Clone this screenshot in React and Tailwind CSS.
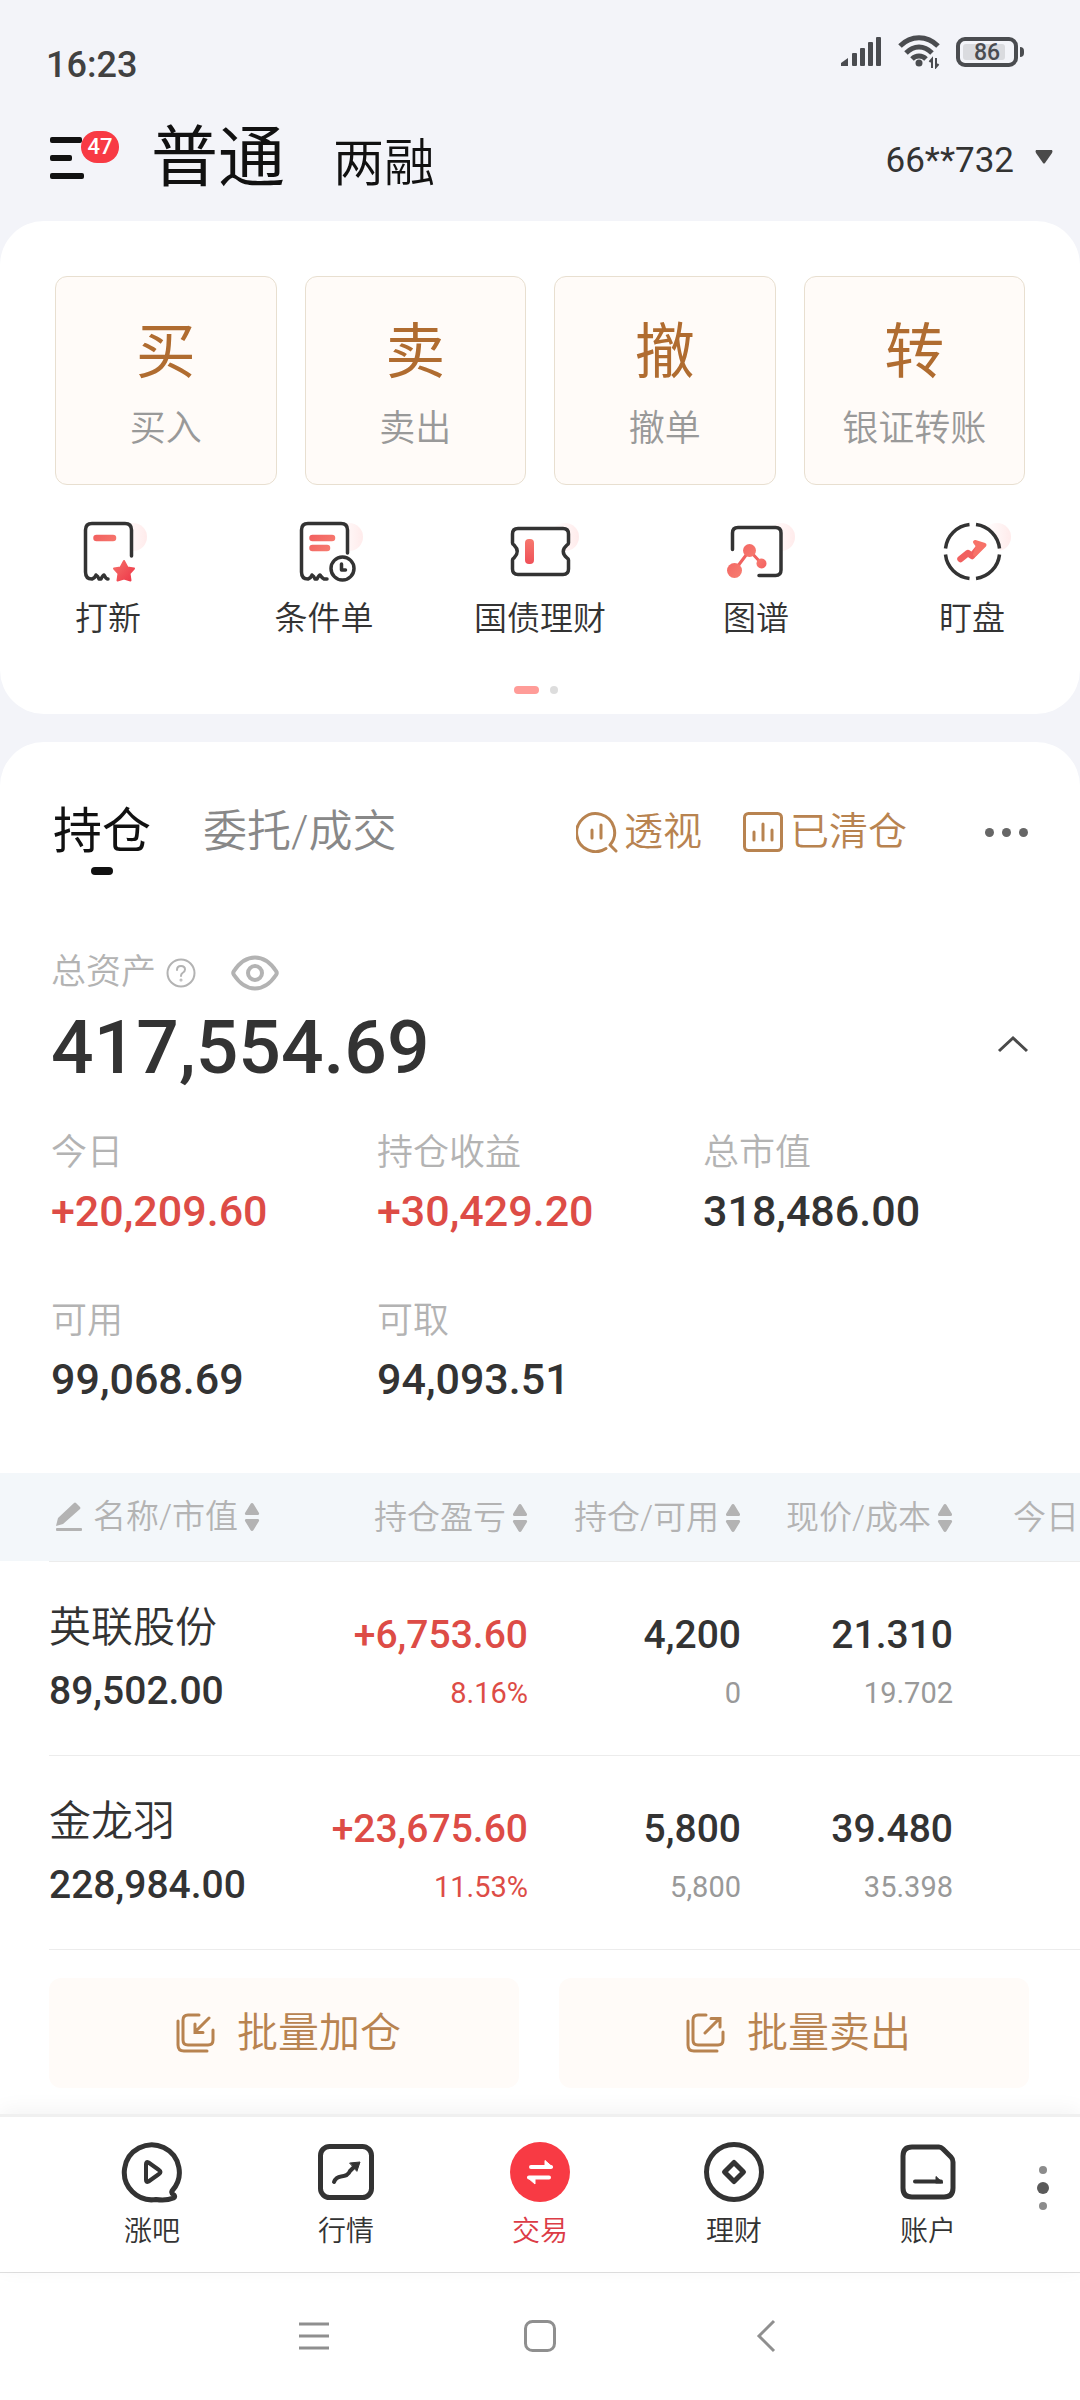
import React from 'react';

const tradeActions = [
  { mark: '买', label: '买入' },
  { mark: '卖', label: '卖出' },
  { mark: '撤', label: '撤单' },
  { mark: '转', label: '银证转账' }
];

const assetStats = [
  { label: '今日', value: '+20,209.60', up: true },
  { label: '持仓收益', value: '+30,429.20', up: true },
  { label: '总市值', value: '318,486.00' },
  { label: '可用', value: '99,068.69' },
  { label: '可取', value: '94,093.51' }
];

const holdings = [
  {
    name: '英联股份',
    marketValue: '89,502.00',
    profit: '+6,753.60',
    profitRate: '8.16%',
    position: '4,200',
    available: '0',
    price: '21.310',
    cost: '19.702'
  },
  {
    name: '金龙羽',
    marketValue: '228,984.00',
    profit: '+23,675.60',
    profitRate: '11.53%',
    position: '5,800',
    available: '5,800',
    price: '39.480',
    cost: '35.398'
  }
];

const StatusBar = () => (
  <div className="flex items-start justify-between pl-[46px] pr-14 pt-[35px] h-21">
    <span className="mt-3 text-[36px] leading-[36px] font-medium text-[#414141]">16:23</span>
    <div className="flex items-center gap-4 text-[#4a4c50]">
      <svg width="41" height="30" viewBox="0 0 41 30" fill="currentColor">
        <path d="M0 29V26L7 21V29Z" />
        <rect x="11" y="16" width="5" height="13" rx="1" />
        <rect x="19" y="11" width="5" height="18" rx="1" />
        <rect x="27" y="5" width="5" height="24" rx="1" />
        <rect x="35" y="0" width="5" height="29" rx="1" />
      </svg>
      <svg width="42" height="34" viewBox="0 0 42 34" fill="none" stroke="currentColor" strokeWidth="5">
        <path d="M2 11C13 0 29 0 40 11" />
        <path d="M8 18C16 10 26 10 34 18" />
        <path d="M14 24C18 20 24 20 28 24" />
        <circle cx="21" cy="28" r="3.500" fill="currentColor" stroke="none" />
        <path d="M34 33V24L31.500 27M38 23V32L40.500 29" strokeWidth="2" />
      </svg>
      <div className="flex items-center gap-0.5">
        <div className="flex h-[30px] w-[62px] rounded-[9px] border-4 border-current p-[3px]">
          <div className="flex w-[42px] items-center justify-center rounded-[3px] bg-[#dadbdf] pl-1.5 text-[23px] leading-none font-medium">86</div>
        </div>
        <div className="h-2.5 w-1 rounded-r bg-current"></div>
      </div>
    </div>
  </div>
);

const Header = () => (
  <header className="flex items-start justify-between pl-[50px] pr-[26px] h-[137px]">
    <div className="flex items-start">
      <button type="button" aria-label="菜单" className="relative mt-[51px] w-[70px] h-12 text-[#111111]">
        <svg width="36" height="44" viewBox="0 0 36 44" fill="currentColor">
          <rect x="0" y="0" width="32" height="6" rx="2" />
          <rect x="0" y="18" width="22" height="6" rx="2" />
          <rect x="0" y="36" width="34" height="6" rx="2" />
        </svg>
        <span className="absolute -top-1 left-[31px] flex h-8 w-[38px] items-center justify-center rounded-full bg-[#f83a44] text-[22px] leading-none font-medium text-white">47</span>
      </button>
      <div className="ml-[31px] mt-[34px] flex items-baseline gap-12 text-[#111111]">
        <button type="button" className="text-[67px] leading-[80px] font-normal">普通</button>
        <button type="button" className="text-[51px] leading-[80px]">两融</button>
      </div>
    </div>
    <button type="button" className="mt-[59px] flex items-start gap-5 text-[35px] leading-9 font-normal text-[#333333]">
      66**732
      <svg className="mt-1.5" width="20" height="16" viewBox="0 0 20 16" fill="#4a4a4a">
        <path d="M2 1H18Q19 2 18 4L11 14Q10 15 9 14L2 4Q1 2 2 1Z" />
      </svg>
    </button>
  </header>
);

/* Soft pink disc behind each quick entry icon */
const QuickIcon = ({ children }) => (
  <svg width="80" height="72" viewBox="0 0 80 72" fill="none" stroke="#333333" strokeWidth="3.500" strokeLinecap="round" strokeLinejoin="round">
    <circle cx="65" cy="22" r="14" fill="url(#quickDisc)" stroke="none" />
    {children}
  </svg>
);

const quickEntries = [
  {
    label: '打新',
    icon: (
      <QuickIcon>
        <path d="M63.500 41V15Q63.500 8.500 57 8.500H24Q17.500 8.500 17.500 15V57Q17.500 64 24 64Q27 63 28 60Q30 61 31 64H33Q35 60 36 60Q38 64 40 64" fill="white" />
        <path d="M28.500 23H45" stroke="url(#quickRed)" strokeWidth="6.500" />
        <path d="M56 46L59.500 52.500L66 53.500L61.500 58.500L62.500 65.500L56 63.500L49.500 65.500L50.500 58.500L46 53.500L52.500 52.500Z" fill="url(#quickRed)" stroke="url(#quickRed)" strokeWidth="2" />
      </QuickIcon>
    )
  },
  {
    label: '条件单',
    icon: (
      <QuickIcon>
        <path d="M63.500 38V15Q63.500 8.500 57 8.500H24Q17.500 8.500 17.500 15V57Q17.500 64 24 64Q27 63 28 60Q30 61 31 64H33Q35 60 36 60Q38 63 40 64H43" fill="white" />
        <path d="M28.500 23H48M28.500 33H43" stroke="url(#quickRed)" strokeWidth="6.500" />
        <circle cx="58.500" cy="53.500" r="11.500" fill="white" />
        <path d="M57.500 49V55H61.500" />
      </QuickIcon>
    )
  },
  {
    label: '国债理财',
    icon: (
      <QuickIcon>
        <path d="M18 13.500H63Q68.500 13.500 68.500 19V28Q68.500 29.500 67 30Q59.500 36.500 67 43Q68.500 44 68.500 45V54Q68.500 59.500 63 59.500H18Q12.500 59.500 12.500 54V45Q12.500 44 14 43Q20.500 36.500 14 30Q12.500 29.500 12.500 28V19Q12.500 13.500 18 13.500Z" fill="white" />
        <rect x="25" y="24" width="9" height="25" rx="4" fill="url(#quickRed2)" stroke="none" />
      </QuickIcon>
    )
  },
  {
    label: '图谱',
    icon: (
      <QuickIcon>
        <path d="M16.500 34.500V18Q16.500 12.500 22 12.500H59.500Q65 12.500 65 18V55Q65 60.500 59.500 60.500H43" fill="white" />
        <path d="M18.500 55.500L33.500 35.500L45.500 48.500" stroke="#f0625f" strokeWidth="3" />
        <circle cx="33.500" cy="35.500" r="6.500" fill="url(#quickRed)" stroke="none" />
        <circle cx="18.500" cy="55.500" r="7.500" fill="url(#quickRed)" stroke="none" />
        <circle cx="45.500" cy="48.500" r="5" fill="url(#quickRed)" stroke="none" />
      </QuickIcon>
    )
  },
  {
    label: '盯盘',
    icon: (
      <QuickIcon>
        <circle cx="40.500" cy="36.500" r="27" fill="white" stroke="none" />
        <path d="M44 9.500A27 27 0 0 1 67.500 33.500M67.500 39.500A27 27 0 0 1 44 63.500M37.500 63.500A27 27 0 0 1 13.500 39.500M13.500 33.500A27 27 0 0 1 37.500 9.500" strokeLinecap="butt" />
        <path d="M28.500 44L36 38L40 41L48 31" stroke="#f1605f" strokeWidth="6.500" />
        <path d="M43 27L52.500 30L43 39.500L46 31Z" fill="#f77c70" stroke="#f77268" strokeWidth="4" />
      </QuickIcon>
    )
  }
];

const QuickPanel = () => (
  <section className="rounded-[44px] bg-white pt-[55px] pb-5">
    <div className="grid grid-cols-4 gap-7 px-[55px]">
      {tradeActions.map((action) => (
        <button key={action.label} type="button" className="flex h-[209px] flex-col items-center rounded-xl border border-[#e8dfd0] bg-[#fffbf8] pt-11">
          <span className="text-[60px] leading-[64px] font-normal text-[#b06c30]">{action.mark}</span>
          <span className="mt-6 text-[36px] leading-10 text-[#999999]">{action.label}</span>
        </button>
      ))}
    </div>
    <svg width="0" height="0" className="absolute">
      <defs>
        <linearGradient id="quickDisc" x1="0" y1="0" x2="1" y2="0">
          <stop offset="0.300" stopColor="#fffafa" />
          <stop offset="1" stopColor="#ffebeb" />
        </linearGradient>
        <linearGradient id="quickRed" gradientUnits="userSpaceOnUse" x1="15" y1="20" x2="66" y2="66">
          <stop offset="0" stopColor="#f0575a" />
          <stop offset="0.500" stopColor="#f77c70" />
          <stop offset="1" stopColor="#ee3648" />
        </linearGradient>
        <linearGradient id="quickRed2" gradientUnits="userSpaceOnUse" x1="40" y1="24" x2="34" y2="50">
          <stop offset="0" stopColor="#f77c70" />
          <stop offset="1" stopColor="#ef5058" />
        </linearGradient>
      </defs>
    </svg>
    <div className="mt-[30px] grid grid-cols-5">
      {quickEntries.map((entry) => (
        <button key={entry.label} type="button" className="flex flex-col items-center">
          {entry.icon}
          <span className="mt-3 text-[33px] leading-10 text-[#333333]">{entry.label}</span>
        </button>
      ))}
    </div>
    <div className="mt-[47px] flex items-center justify-center gap-[11px] pr-2">
      <span className="h-2 w-[25px] rounded-full bg-[#ff9c98]"></span>
      <span className="size-2 rounded-full bg-[#dddddd]"></span>
    </div>
  </section>
);

const TabBar = () => (
  <div className="flex items-start justify-between pl-[53px] pr-[52px] pt-[60px]">
    <div className="flex items-start gap-[52px]">
      <button type="button" className="flex flex-col items-center text-[49px] leading-[60px] font-normal text-[#111111]">
        持仓
        <span className="mt-[5px] h-2 w-[22px] rounded-full bg-[#111111]"></span>
      </button>
      <button type="button" className="text-[44px] leading-[60px] text-[#888888]">委托/成交</button>
    </div>
    <div className="flex h-[60px] items-center text-[39px] leading-[60px] text-[#b88350]">
      <button type="button" className="flex items-center gap-1.5">
        <svg width="42" height="42" viewBox="0 0 42 42" fill="none" stroke="currentColor" strokeWidth="3" strokeLinecap="round">
          <path d="M34 34A19 19 0 1 0 30 37.500M34 34L40 40" />
          <path d="M16 19V27M25 14V27" />
        </svg>
        透视
      </button>
      <button type="button" className="ml-10 flex items-center gap-1.5">
        <svg width="42" height="42" viewBox="0 0 42 42" fill="none" stroke="currentColor" strokeWidth="3" strokeLinecap="round">
          <rect x="2.500" y="2.500" width="37" height="37" rx="4" />
          <path d="M12 21V29M21 13V29M30 19V29" />
        </svg>
        已清仓
      </button>
      <button type="button" aria-label="更多" className="ml-[78px] flex gap-2">
        <span className="size-[9px] rounded-full bg-[#666666]"></span>
        <span className="size-[9px] rounded-full bg-[#666666]"></span>
        <span className="size-[9px] rounded-full bg-[#666666]"></span>
      </button>
    </div>
  </div>
);

const AssetSummary = () => (
  <div className="pl-[51px] pr-[51px] pt-[78px]">
    <div className="flex items-center text-[35px] leading-10 text-[#b3b3b3]">
      <span>总资产</span>
      <button type="button" aria-label="总资产说明" className="ml-2.5">
        <svg width="30" height="30" viewBox="0 0 30 30" fill="none" stroke="currentColor" strokeWidth="2" strokeLinecap="round">
          <circle cx="15" cy="15" r="13.500" />
          <path d="M11 12Q11 8 15 8Q19 8 19 11.500Q19 13.500 16.500 15Q15 16 15 18" />
          <circle cx="15" cy="22" r="0.500" />
        </svg>
      </button>
      <button type="button" aria-label="隐藏金额" className="ml-[35px]">
        <svg width="48" height="36" viewBox="0 0 48 36" fill="none" stroke="currentColor" strokeWidth="4">
          <path d="M3 20Q1.500 18 3 16Q12 2.500 24 2.500Q36 2.500 45 16Q46.500 18 45 20Q36 33.500 24 33.500Q12 33.500 3 20Z" />
          <circle cx="24" cy="18" r="7" />
        </svg>
      </button>
    </div>
    <div className="mt-[14px] flex items-start justify-between">
      <span className="text-[75px] leading-[80px] font-medium text-[#333333]">417,554.69</span>
      <button type="button" aria-label="收起" className="mt-7">
        <svg width="32" height="18" viewBox="0 0 32 18" fill="none" stroke="#4a4a4a" strokeWidth="3">
          <path d="M2 16L16 3L30 16" />
        </svg>
      </button>
    </div>
    <dl className="mt-11 grid grid-cols-3 gap-y-10">
      {assetStats.map((stat) => (
        <div key={stat.label} className="h-32">
          <dt className="text-[36px] leading-11 text-[#b3b3b3]">{stat.label}</dt>
          <dd className={`mt-3 text-[43px] leading-12 font-medium ${stat.up ? 'text-[#dd4c46]' : 'text-[#333333]'}`}>{stat.value}</dd>
        </div>
      ))}
    </dl>
  </div>
);

const SortMark = () => (
  <svg className="shrink-0" width="16" height="28" viewBox="0 0 16 28" fill="currentColor">
    <path d="M8 0Q9 0 9.500 1L15 10Q15.500 11.500 14 12H2Q0.500 11.500 1 10L6.500 1Q7 0 8 0Z" />
    <path d="M8 28Q9 28 9.500 27L15 18Q15.500 16.500 14 16H2Q0.500 16.500 1 18L6.500 27Q7 28 8 28Z" />
  </svg>
);

const SortButton = ({ label }) => (
  <button type="button" className="inline-flex items-center gap-1.5 align-middle whitespace-nowrap">
    {label}
    <SortMark />
  </button>
);

const PairCell = ({ main, sub, mainColor, subColor }) => (
  <td className="border-t border-[#ececec] text-right align-top pt-[49px]">
    <div className={`text-[39px] leading-12 font-medium ${mainColor}`}>{main}</div>
    <div className={`mt-4 text-[29px] leading-9 font-normal ${subColor}`}>{sub}</div>
  </td>
);

const HoldingsTable = () => (
  <div className="mt-[46px] overflow-hidden">
    <table className="w-[1240px] table-fixed border-separate border-spacing-0">
      <colgroup>
        <col className="w-[300px]" />
        <col className="w-[228px]" />
        <col className="w-[213px]" />
        <col className="w-[212px]" />
        <col />
      </colgroup>
      <thead>
        <tr className="h-22 bg-[#f3f7fa] text-[33px] leading-10 text-[#b3b3b3]">
          <th className="pl-[55px] text-left font-[350]">
            <div className="flex items-center gap-2.5">
              <svg width="28" height="30" viewBox="0 0 28 30" fill="currentColor">
                <path d="M19 1Q20 0 21 1L25 5Q26 6 25 7L8 22L1 24L3 16Z" />
                <rect x="1" y="26" width="26" height="3" rx="1" />
              </svg>
              <SortButton label="名称/市值" />
            </div>
          </th>
          <th className="text-right font-[350]"><SortButton label="持仓盈亏" /></th>
          <th className="text-right font-[350]"><SortButton label="持仓/可用" /></th>
          <th className="text-right font-[350]"><SortButton label="现价/成本" /></th>
          <th className="pl-[60px] text-left font-[350]"><SortButton label="今日" /></th>
        </tr>
      </thead>
      <tbody>
        {holdings.map((row) => (
          <tr key={row.name}>
            <td className="pl-[49px]">
              <div className="h-[194px] border-t border-[#ececec] pt-10">
                <div className="text-[42px] leading-13 text-[#333333]">{row.name}</div>
                <div className="mt-[13px] text-[39px] leading-12 font-medium text-[#333333]">{row.marketValue}</div>
              </div>
            </td>
            <PairCell main={row.profit} sub={row.profitRate} mainColor="text-[#dd4c46]" subColor="text-[#dd4c46]" />
            <PairCell main={row.position} sub={row.available} mainColor="text-[#333333]" subColor="text-[#999999]" />
            <PairCell main={row.price} sub={row.cost} mainColor="text-[#333333]" subColor="text-[#999999]" />
            <td className="border-t border-[#ececec]"></td>
          </tr>
        ))}
      </tbody>
    </table>
  </div>
);

const BatchButtons = () => (
  <div className="ml-[49px] border-t border-[#ececec] pr-[51px] pt-7 pb-[26px]">
    <div className="grid grid-cols-2 gap-10">
      <button type="button" className="flex h-[110px] items-center justify-center gap-5 rounded-xl bg-[#fffbf8] pl-2 text-[41px] leading-none text-[#b88350]">
        <svg width="42" height="42" viewBox="0 0 42 42" fill="none" stroke="currentColor" strokeWidth="3" strokeLinecap="round">
          <path d="M24 3H13Q8 3 8 8V28Q8 33 13 33H33Q38 33 38 28V18" />
          <path d="M3 9V33Q3 39 9 39H32M34 6L21 19M20 12V20.500H28" />
        </svg>
        批量加仓
      </button>
      <button type="button" className="flex h-[110px] items-center justify-center gap-5 rounded-xl bg-[#fffbf8] pl-2 text-[41px] leading-none text-[#b88350]">
        <svg width="42" height="42" viewBox="0 0 42 42" fill="none" stroke="currentColor" strokeWidth="3" strokeLinecap="round">
          <path d="M21 3H13Q8 3 8 8V28Q8 33 13 33H33Q38 33 38 28V20" />
          <path d="M3 9V33Q3 39 9 39H32M20 21L34 7M26 6.500H35V15" />
        </svg>
        批量卖出
      </button>
    </div>
  </div>
);

const NavIcon = ({ children }) => (
  <svg width="64" height="64" viewBox="0 0 64 64" fill="none" stroke="#333333" strokeWidth="5" strokeLinecap="round" strokeLinejoin="round">
    {children}
  </svg>
);

const navItems = [
  {
    label: '涨吧',
    icon: (
      <NavIcon>
        <path d="M52 51A27.500 27.500 0 1 0 36 59.500Q46 61 53.500 58Q55.500 57 54 55Q51 53 52 51Z" />
        <path d="M26 24Q26 21 28.500 22.500L39 30Q42 32 39 34L28.500 41.500Q26 43 26 40Z" strokeWidth="4" />
      </NavIcon>
    )
  },
  {
    label: '行情',
    icon: (
      <NavIcon>
        <rect x="6.500" y="6.500" width="51" height="51" rx="9" />
        <path d="M20 42Q22 37 27 36.500Q34 36 36 31L41 26" strokeWidth="4" />
        <path d="M36 23L46 22L43 31Z" fill="#333333" strokeWidth="1" />
      </NavIcon>
    )
  },
  {
    label: '交易',
    active: true,
    icon: (
      <NavIcon>
        <circle cx="32" cy="32" r="30" fill="#f83a44" stroke="none" />
        <path d="M23 27H43M41 37.500H21" stroke="white" strokeWidth="4" />
        <path d="M37 27V20.500L44.500 27ZM27 37.500V44L19.500 37.500Z" fill="white" stroke="white" strokeWidth="1" />
      </NavIcon>
    )
  },
  {
    label: '理财',
    icon: (
      <NavIcon>
        <circle cx="32" cy="32" r="27.500" />
        <path d="M32 22.500L41.500 32L32 41.500L22.500 32Z" />
      </NavIcon>
    )
  },
  {
    label: '账户',
    icon: (
      <NavIcon>
        <path d="M16 7H43Q45 7 47 9L55 17Q57 19 57 22V48Q57 57 48 57H16Q7 57 7 48V16Q7 7 16 7Z" />
        <path d="M19 41.500H45" strokeWidth="4" />
        <path d="M40 41V36.500L47 43H40Z" fill="#333333" strokeWidth="1" />
      </NavIcon>
    )
  }
];

const BottomNav = () => (
  <nav className="relative border-t-3 border-[#f0f0f0] bg-white px-[55px] pt-[23px] pb-5 shadow-[0_-4px_20px_rgba(0,0,0,0.05)]">
    <div className="grid grid-cols-5">
      {navItems.map((item) => (
        <a key={item.label} href="#" className="flex flex-col items-center">
          {item.icon}
          <span className={`mt-2 text-[28px] leading-10 ${item.active ? 'text-[#dc3c46]' : 'text-[#333333]'}`}>{item.label}</span>
        </a>
      ))}
    </div>
    <button type="button" aria-label="更多功能" className="absolute top-[49px] right-[31px] flex flex-col items-center gap-2">
      <span className="size-2 rounded-full bg-[#8c8c8c]"></span>
      <span className="size-3 rounded-full bg-[#5a5a5a]"></span>
      <span className="size-2 rounded-full bg-[#8c8c8c]"></span>
    </button>
  </nav>
);

const SystemNav = () => (
  <div className="flex justify-center border-t border-[#e0e0e0] bg-white pt-[46px] pb-12 text-[#8f8f8f]">
    <button type="button" aria-label="最近任务" className="flex w-[226px] justify-center">
      <svg width="32" height="34" viewBox="0 0 32 34" stroke="currentColor" strokeWidth="3">
        <path d="M1 5H31M1 17H31M1 29H31" />
      </svg>
    </button>
    <button type="button" aria-label="主屏幕" className="flex w-[226px] justify-center">
      <svg width="34" height="34" viewBox="0 0 34 34" fill="none" stroke="currentColor" strokeWidth="3">
        <rect x="2.500" y="2.500" width="29" height="29" rx="7" />
      </svg>
    </button>
    <button type="button" aria-label="返回" className="flex w-[226px] justify-center">
      <svg width="20" height="34" viewBox="0 0 20 34" fill="none" stroke="currentColor" strokeWidth="3">
        <path d="M18 2L3 17L18 32" />
      </svg>
    </button>
  </div>
);

const App = () => {
  return (
    <div className="flex min-h-screen flex-col overflow-hidden bg-white font-[350] font-['Roboto','Noto_Sans_CJK_SC',sans-serif]">
      <div className="bg-[#f3f4f9]">
        <StatusBar />
        <Header />
        <main>
          <QuickPanel />
          <section className="mt-7 rounded-t-[44px] bg-white">
            <TabBar />
            <AssetSummary />
            <HoldingsTable />
            <BatchButtons />
          </section>
        </main>
      </div>
      <BottomNav />
      <SystemNav />
    </div>
  );
};

export default App;
